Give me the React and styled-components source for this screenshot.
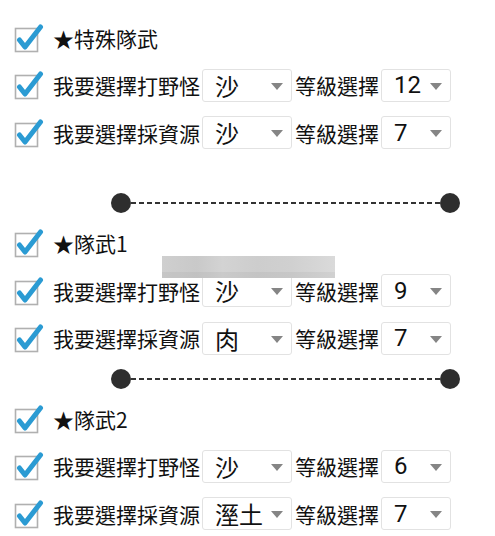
import React from "react";
import styled, { createGlobalStyle } from "styled-components";

const Global = createGlobalStyle`
  html, body { margin: 0; padding: 0; background: #fff; }
  body { font-family: Roboto, "Noto Sans CJK TC", sans-serif; color: #111; }
`;

const Page = styled.div`
  width: 495px;
  height: 536px;
  padding-top: 14px;
  box-sizing: border-box;
  overflow: hidden;
  position: relative;
`;

const Group = styled.div`
  display: flex;
  flex-direction: column;
  margin-bottom: ${(p) => p.$after || 0}px;
  position: relative;
`;

const Row = styled.div`
  height: 47.5px;
  display: flex;
  align-items: center;
  padding-left: 14px;
  position: relative;
`;

const Label = styled.span`
  font-family: "Noto Sans CJK TC", sans-serif;
  font-size: 21px;
  margin-left: 9px;
  margin-right: 2px;
  white-space: nowrap;
`;

const Mid = styled.span`
  font-family: "Noto Sans CJK TC", sans-serif;
  font-size: 21px;
  margin: 0 2px 0 3px;
  white-space: nowrap;
`;

const Select = styled.div`
  width: ${(p) => p.$w}px;
  height: 33px;
  box-sizing: border-box;
  border: 1px solid #e2e2e2;
  border-radius: 3px;
  display: flex;
  align-items: center;
  justify-content: space-between;
  padding: 0 8px 0 12px;
  font-family: Roboto, "Noto Sans CJK TC", sans-serif;
  font-size: 24px;
  color: #111;
`;

const Arrow = styled.span`
  width: 0;
  height: 0;
  border-left: 6px solid transparent;
  border-right: 6px solid transparent;
  border-top: 7px solid #858585;
  margin-top: 2px;
`;

const DividerWrap = styled.div`
  height: 33px;
  display: flex;
  align-items: center;
  padding-left: 111px;
  width: 349px;
`;

const Dot = styled.span`
  width: 20px;
  height: 20px;
  border-radius: 50%;
  background: #2e2e2e;
  flex: none;
`;

const Dash = styled.span`
  flex: 1;
  height: 2px;
  background: repeating-linear-gradient(
    90deg,
    #333 0 5px,
    transparent 5px 8px
  );
`;

const Blur = styled.div`
  position: absolute;
  left: 162px;
  top: 36px;
  width: 173px;
  height: 22px;
  background: linear-gradient(
    90deg,
    #cfcfcf 0%,
    #c9c9c9 20%,
    #d3d3d3 35%,
    #cdcdcd 55%,
    #d0d0d0 75%,
    #dadada 100%
  );
  box-shadow: inset 0 -6px 0 rgba(0, 0, 0, 0.04);
`;

const Check = () => (
  <svg width="30" height="30" viewBox="0 0 30 30">
    <rect x="1.5" y="5.5" width="22" height="23" fill="#fff" stroke="#b0b0b0" strokeWidth="1.6" />
    <polyline
      points="5.5,17 11,24 26.5,4"
      fill="none"
      stroke="#2b9bd3"
      strokeWidth="5"
      strokeLinecap="round"
      strokeLinejoin="round"
    />
  </svg>
);

const Header = ({ text }) => (
  <Row>
    <Check />
    <Label>{text}</Label>
  </Row>
);

const OptionRow = ({ label, value, level }) => (
  <Row>
    <Check />
    <Label>{label}</Label>
    <Select $w={90}>
      <span>{value}</span>
      <Arrow />
    </Select>
    <Mid>等級選擇</Mid>
    <Select $w={70}>
      <span>{level}</span>
      <Arrow />
    </Select>
  </Row>
);

const Divider = () => (
  <DividerWrap>
    <Dot />
    <Dash />
    <Dot />
  </DividerWrap>
);

export default function App() {
  return (
    <>
      <Global />
      <Page>
        <Group $after={30}>
          <Header text="★特殊隊武" />
          <OptionRow label="我要選擇打野怪" value="沙" level="12" />
          <OptionRow label="我要選擇採資源" value="沙" level="7" />
        </Group>
        <Divider />
        <Group>
          <Header text="★隊武1" />
          <OptionRow label="我要選擇打野怪" value="沙" level="9" />
          <OptionRow label="我要選擇採資源" value="肉" level="7" />
          <Blur />
        </Group>
        <Divider />
        <Group>
          <Header text="★隊武2" />
          <OptionRow label="我要選擇打野怪" value="沙" level="6" />
          <OptionRow label="我要選擇採資源" value="溼土" level="7" />
        </Group>
      </Page>
    </>
  );
}
